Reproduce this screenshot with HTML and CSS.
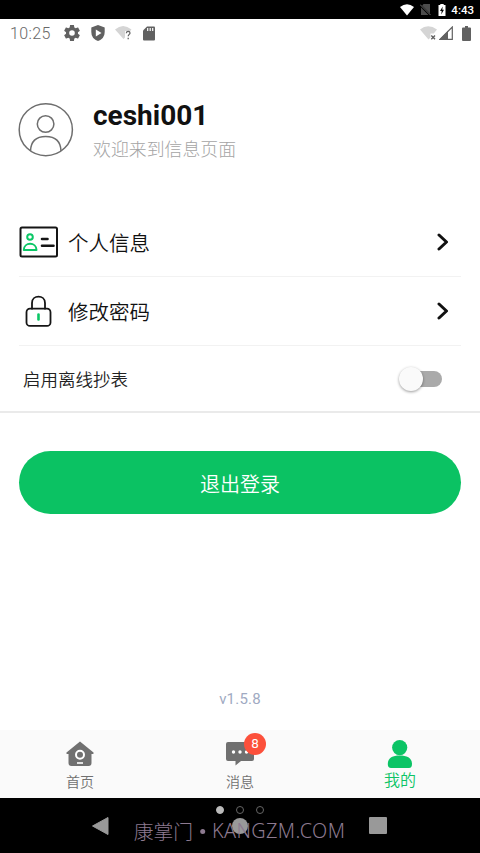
FILE: index.html
```html
<!DOCTYPE html>
<html lang="zh-CN">
<head>
<meta charset="utf-8">
<title>我的</title>
<link rel="stylesheet" href="styles.css">
</head>
<body>
<div class="system-bar">
  <svg width="14" height="12" viewBox="0 0 14 12"><path d="M0 3Q7-2.500 14 3L7 11.500Z" fill="#fff"/></svg>
  <svg width="11" height="12" viewBox="0 0 11 12"><path d="M3.500 0H10V11H1V3Z" fill="#4c4c4c"/><path d="M0 1L10.500 11.500" stroke="#000" stroke-width="2.200"/><path d="M0 .5L10.500 11" stroke="#777" stroke-width=".9"/></svg>
  <svg width="8" height="12" viewBox="0 0 8 12"><path d="M2.300 0H5.700V1H7.500V12H.5V1H2.300Z" fill="#fff"/><path d="M4.700 2.500L2 7H3.700L3.200 10.500L6 5.800H4.300Z" fill="#000"/></svg>
  <span class="system-time">4:43</span>
</div>
<header class="status-bar">
  <span class="status-time">10:25</span>
  <div class="status-icons">
    <svg width="16" height="16" viewBox="2 2 20 20"><path fill="#616161" d="M19.430 12.980c.04-.32.07-.64.07-.98s-.03-.66-.07-.98l2.110-1.650c.19-.15.24-.42.12-.64l-2-3.460c-.12-.22-.39-.3-.61-.22l-2.490 1c-.52-.4-1.080-.73-1.690-.98l-.38-2.650C14.460 2.180 14.250 2 14 2h-4c-.25 0-.46.18-.49.42l-.38 2.650c-.61.25-1.170.59-1.690.98l-2.490-1c-.23-.09-.49 0-.61.22l-2 3.460c-.13.22-.07.49.12.64l2.110 1.650c-.04.32-.07.65-.07.98s.03.66.07.98l-2.110 1.650c-.19.15-.24.42-.12.64l2 3.460c.12.22.39.3.61.22l2.490-1c.52.4 1.080.73 1.690.98l.38 2.650c.03.24.24.42.49.42h4c.25 0 .46-.18.49-.42l.38-2.650c.61-.25 1.170-.59 1.690-.98l2.490 1c.23.09.49 0 .61-.22l2-3.460c.12-.22.07-.49-.12-.64zM12 15.500A3.500 3.500 0 1 1 12 8.500a3.500 3.500 0 0 1 0 7z"/></svg>
    <svg width="14" height="16" viewBox="0 0 14 16"><path d="M7 0L13.700 2.500V7Q13.700 13.500 7 16Q.3 13.500.3 7V2.500Z" fill="#616161"/><path d="M4.800 4.500L10.500 8L4.800 11.500Z" fill="#fff"/></svg>
    <svg class="wifi-unknown" width="17" height="15" viewBox="0 0 17 15"><path d="M0 3.500Q8-3.500 16.500 3.500L13.500 7V5H10V11.500L8.500 13Z" fill="#d5d5d5"/><path d="M11.300 7.200Q11.500 5.400 13.200 5.400Q15 5.400 15 7C15 8.300 13.200 8.600 13.200 10.300M13.200 11.700V13.200" fill="none" stroke="#666" stroke-width="1.300"/></svg>
    <svg width="12" height="15" viewBox="0 0 12 15"><path d="M4 .5H11Q12 .5 12 1.500V13.500Q12 14.500 11 14.500H1Q0 14.500 0 13.500V4.500Z" fill="#616161"/><path d="M4.700 2V5M7.200 2V5M9.700 2V5" stroke="#fff" stroke-width="1.200"/></svg>
  </div>
  <div class="signal-icons">
    <svg width="18" height="15" viewBox="0 0 18 15"><path d="M0 3.500Q8-3 17 3.500L13.800 7.500H10.500V11.500L8.500 13.500Z" fill="#d5d5d5"/><path d="M11.300 9.500L15 13.200M15 9.500L11.300 13.200" stroke="#616161" stroke-width="1.400"/></svg>
    <svg class="cell" width="14" height="14" viewBox="0 0 14 14"><path d="M13.300 1V13.300H1Z" fill="#fff" stroke="#616161" stroke-width="1.200"/><path d="M9 4.800V14H0Z" fill="#616161"/></svg>
    <svg width="9" height="15" viewBox="0 0 9 15"><path d="M3 0H6V1.500H8Q9 1.500 9 2.500V14Q9 15 8 15H1Q0 15 0 14V2.500Q0 1.500 1 1.500H3Z" fill="#616161"/></svg>
  </div>
</header>
<main class="page">
  <section class="profile">
    <svg width="56" height="56" viewBox="0 0 56 56" fill="none" stroke="#6e6e6e" stroke-width="1.500"><ellipse cx="27.800" cy="27.700" rx="26.600" ry="26"/><circle cx="27.600" cy="22" r="8.300"/><path d="M12.500 49Q13 34.500 27.700 34.500Q42.500 34.500 43 49"/></svg>
    <div class="profile-text">
      <h1 class="username">ceshi001</h1>
      <p class="welcome">欢迎来到信息页面</p>
    </div>
  </section>
  <nav class="menu">
    <a class="menu-row">
      <svg class="menu-icon" width="40" height="34" viewBox="0 0 40 34" fill="none" stroke-linecap="round"><rect x="1.500" y="2.500" width="36.500" height="29" rx="1.500" stroke="#151515" stroke-width="2"/><g stroke="#0bc766" stroke-width="2"><circle cx="11" cy="12" r="2.800"/><path d="M4.800 25C4.800 16.800 17.500 16.800 17.500 25Z" stroke-linejoin="round"/></g><path d="M23 14H28.500M23 20.800H34.500" stroke="#151515" stroke-width="2.600"/></svg>
      <span class="menu-label">个人信息</span>
      <svg class="chevron" width="12" height="18" viewBox="0 0 12 18"><path d="M2 2L9.500 9L2 16" fill="none" stroke="#111" stroke-width="3" stroke-linecap="round" stroke-linejoin="round"/></svg>
    </a>
    <a class="menu-row">
      <svg class="menu-icon" width="40" height="34" viewBox="0 0 40 34" fill="none" stroke-linecap="round"><path d="M13 14.700V9C13 .5 26 .5 26 9V14.700" stroke="#151515" stroke-width="1.800"/><rect x="7.500" y="14.700" width="24" height="17.200" rx="3.500" stroke="#151515" stroke-width="1.800"/><path d="M19.500 20.500V25.500" stroke="#0bc766" stroke-width="2.600"/></svg>
      <span class="menu-label">修改密码</span>
      <svg class="chevron" width="12" height="18" viewBox="0 0 12 18"><path d="M2 2L9.500 9L2 16" fill="none" stroke="#111" stroke-width="3" stroke-linecap="round" stroke-linejoin="round"/></svg>
    </a>
  </nav>
  <div class="setting-row">
    <span>启用离线抄表</span>
    <span class="switch"><span class="switch-thumb"></span></span>
  </div>
  <button class="logout">退出登录</button>
  <p class="version">v1.5.8</p>
</main>
<nav class="tabs">
  <a class="tab">
    <svg width="28" height="26" viewBox="0 0 28 26"><path d="M14 .5L27.500 11.500Q28 12.800 26.800 13H25.500V22Q25.500 25 22.500 25H5.500Q2.500 25 2.500 22V13H1.200Q0 12.800.5 11.500Z" fill="#707070"/><circle cx="14" cy="13.800" r="4" fill="none" stroke="#fff" stroke-width="2"/><path d="M11 22H17" stroke="#fff" stroke-width="1.600"/></svg>
    <span>首页</span>
  </a>
  <a class="tab">
    <span class="message-icon">
      <svg width="28" height="26" viewBox="0 0 28 26"><path d="M2 1H26Q28 1 28 3V18Q28 20 26 20H15L9.500 24.500V20H2Q0 20 0 18V3Q0 1 2 1Z" fill="#707070"/><g fill="#fff"><circle cx="7.500" cy="11" r="1.700"/><circle cx="14" cy="11" r="1.700"/><circle cx="20.500" cy="11" r="1.700"/></g></svg>
      <span class="badge">8</span>
    </span>
    <span>消息</span>
  </a>
  <a class="tab tab-active">
    <svg width="26" height="29" viewBox="0 0 26 29" fill="#0bc465"><circle cx="12.700" cy="7.600" r="7.600"/><path d="M.8 24C.8 17.500 6 15.500 12.700 15.500S25 17.500 25 24Q25 28 22 28H4Q.8 28 .8 24Z"/></svg>
    <span>我的</span>
  </a>
</nav>
<footer class="android-nav">
  <svg width="18" height="20" viewBox="0 0 18 20"><path d="M16 1.500V18.500L.5 10Z" fill="#999" stroke="#999" stroke-linejoin="round"/></svg>
  <div class="home">
    <div class="dots"><i class="dot dot-on"></i><i class="dot"></i><i class="dot"></i></div>
    <i class="home-circle"></i>
    <div class="watermark"><span>康掌门</span><i class="watermark-dot"></i><span class="watermark-domain">KANGZM.COM</span></div>
  </div>
  <i class="recent"></i>
</footer>
</body>
</html>
```

FILE: styles.css
```css
* { box-sizing: border-box; }

body {
  margin: 0;
  width: 480px;
  height: 853px;
  overflow: hidden;
  display: flex;
  flex-direction: column;
  background: #fff;
  font-family: Roboto, "Noto Sans CJK SC", sans-serif;
}

svg { display: block; flex: none; }
h1, p { margin: 0; }

.system-bar {
  height: 19px;
  flex: none;
  background: #000;
  color: #fff;
  display: flex;
  align-items: center;
  justify-content: flex-end;
  gap: 6px;
  padding-right: 6px;
}
.system-bar svg:nth-child(3) { margin-left: 1px; }
.system-time { font: 500 11.500px/19px Roboto, sans-serif; margin-left: -1px; padding-top: 1px; }

.status-bar {
  height: 28px;
  flex: none;
  display: flex;
  align-items: center;
  padding: 0 9px;
  color: #686868;
}
.status-time { width: 55px; font-size: 16px; font-weight: 350; letter-spacing: .4px; padding-left: 1px; }
.status-icons { display: flex; align-items: center; gap: 11px; }
.wifi-unknown { margin-left: -1px; }
.signal-icons { display: flex; align-items: center; margin-left: auto; }
.cell { margin: 0 9px 0 1px; }

.page { flex: 1; min-height: 0; display: flex; flex-direction: column; }

.profile {
  display: flex;
  height: 161px;
  padding: 55px 18px 0;
  gap: 19px;
}
.username { font-size: 28px; line-height: 32px; font-weight: 700; color: #111; letter-spacing: 0; margin-top: -2px; }
.welcome { font-size: 17.900px; line-height: 26px; color: #a4a4a4; font-weight: 300; margin-top: 5px; }

.menu { padding: 0 19px; }
.menu-row {
  height: 69px;
  display: flex;
  align-items: center;
  border-bottom: 1px solid #f2f2f2;
  color: #111;
}
.menu-icon { margin-right: 9px; }
.menu-label { flex: 1; font-size: 20.500px; line-height: 30px; font-weight: 350; padding-top: 4px; }
.chevron { margin-right: 12px; }

.setting-row {
  height: 67px;
  padding: 0 38px 0 23px;
  border-bottom: 2px solid #eaeaea;
  display: flex;
  align-items: center;
  justify-content: space-between;
  color: #222;
  font-size: 17.500px;
  font-weight: 350;
}
.switch {
  width: 38px;
  height: 16px;
  border-radius: 8px;
  background: #aaa;
  display: flex;
  align-items: center;
}
.switch-thumb {
  width: 24px;
  height: 24px;
  flex: none;
  margin-left: -5px;
  border-radius: 50%;
  background: #fafafa;
  box-shadow: 0 1px 3px rgba(0, 0, 0, .4);
}

.logout {
  height: 63px;
  margin: 38px 19px 0;
  padding: 4px 0 0;
  border: 0;
  border-radius: 32px;
  background: #0bc263;
  color: #fff;
  font: 350 20px/30px Roboto, "Noto Sans CJK SC", sans-serif;
}
.version { margin-top: auto; padding-bottom: 21px; font-size: 15px; line-height: 20px; text-align: center; color: #a0aac2; letter-spacing: .2px; }

.tabs { height: 68px; flex: none; display: flex; background: #fafafa; }
.tab {
  flex: 1;
  display: flex;
  flex-direction: column;
  align-items: center;
  padding-top: 11px;
  color: #707070;
  font-size: 14px;
  font-weight: 350;
  line-height: 20px;
  gap: 5px;
}
.tab-active { color: #0bc465; font-size: 16px; padding-top: 10px; gap: 2px; }
.message-icon { position: relative; }
.badge {
  position: absolute;
  left: 18px;
  top: -8px;
  width: 22px;
  height: 22px;
  border-radius: 50%;
  background: #fc503b;
  color: #fff;
  font-size: 13.500px;
  font-weight: 400;
  line-height: 21px;
  text-align: center;
}

.android-nav {
  height: 55px;
  flex: none;
  display: flex;
  align-items: center;
  justify-content: space-between;
  padding: 0 93px 0 92px;
  background: #000;
}
.home { position: relative; display: flex; flex-direction: column; align-items: center; gap: 4px; height: 55px; padding-top: 8px; }
.dots { display: flex; gap: 12px; }
.dot { width: 8px; height: 8px; border: 1px solid #666; border-radius: 50%; }
.dot-on { background: #bbb; border-color: #bbb; }
.home-circle { width: 16px; height: 16px; border-radius: 50%; background: #999; }
.watermark {
  position: absolute;
  left: 50%;
  top: 19px;
  transform: translateX(-50%);
  display: flex;
  align-items: center;
  white-space: nowrap;
  font: 300 19.800px/28px "Noto Sans CJK SC", sans-serif;
  color: #8d7a90;
}
.watermark-dot { width: 5px; height: 5px; margin: 0 7px; border-radius: 50%; background: #8d7a90; }
.watermark-domain { font: 300 19.800px/28px "Noto Sans", "Open Sans", sans-serif; letter-spacing: .4px; }
.recent { width: 18px; height: 17px; border-radius: 1px; background: #999; }
```
